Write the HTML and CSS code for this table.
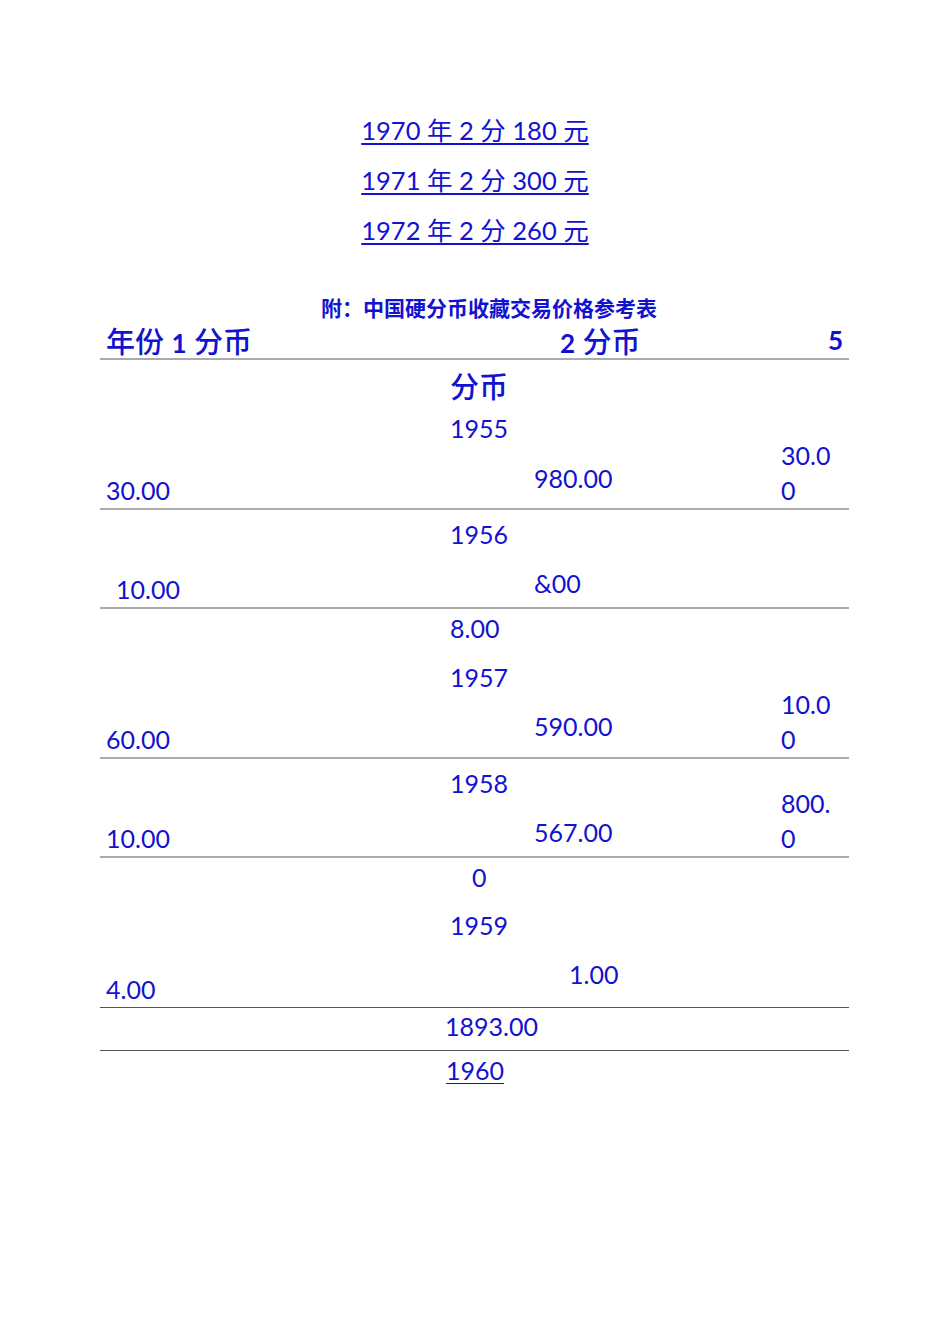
FILE: index.html
```html
<!DOCTYPE html>
<html lang="zh">
<head>
<meta charset="utf-8">
<title>中国硬分币收藏交易价格参考表</title>
<link rel="stylesheet" href="styles.css">
</head>
<body>
<div class="page">
  <div class="links">
    <a class="lnk" href="#">1970 年 2 分 180 元</a>
    <a class="lnk" href="#">1971 年 2 分 300 元</a>
    <a class="lnk" href="#">1972 年 2 分 260 元</a>
  </div>
  <div class="title">附：中国硬分币收藏交易价格参考表</div>
  <div class="table">
    <div class="row head">
      <div class="c c1"><span><span class="cjk">年份</span> <b>1</b> <span class="cjk">分币</span></span></div>
      <div class="c c2"></div>
      <div class="c c3 h3"><span><b>2</b> <span class="cjk">分币</span></span></div>
      <div class="c c4 h4"><b>5</b></div>
    </div>
    <div class="row tall">
      <div class="c c1 end">30.00</div>
      <div class="c c2 pt5"><div class="big">分币</div><div class="mt6">1955</div></div>
      <div class="c c3 end pb12">980.00</div>
      <div class="c c4 end"><span class="wrap">30.00</span></div>
    </div>
    <div class="row short">
      <div class="c c1 end pl16">10.00</div>
      <div class="c c2 pt7">1956</div>
      <div class="c c3 end pb6">&amp;00</div>
      <div class="c c4"></div>
    </div>
    <div class="row tall">
      <div class="c c1 end">60.00</div>
      <div class="c c2 pt2"><div>8.00</div><div class="mt14">1957</div></div>
      <div class="c c3 end pb13">590.00</div>
      <div class="c c4 end"><span class="wrap">10.00</span></div>
    </div>
    <div class="row short">
      <div class="c c1 end">10.00</div>
      <div class="c c2 pt7">1958</div>
      <div class="c c3 end pb6">567.00</div>
      <div class="c c4 end"><span class="wrap">800.0</span></div>
    </div>
    <div class="row tall dark">
      <div class="c c1 end">4.00</div>
      <div class="c c2 pt2"><div class="pl22">0</div><div class="mt13">1959</div></div>
      <div class="c c3 end pb15 pl35">1.00</div>
      <div class="c c4"></div>
    </div>
    <div class="row total dark">
      <div class="c sum">1893.00</div>
    </div>
    <div class="last"><a class="lnk small" href="#">1960</a></div>
  </div>
</div>
</body>
</html>
```

FILE: styles.css
```css
html, body {
  margin: 0;
  padding: 0;
  background: #ffffff;
}

body {
  font-family: Lato, "Noto Sans CJK SC", sans-serif;
  color: #1212cf;
}

.page {
  width: 950px;
  padding-top: 105px;
}

.links {
  display: flex;
  flex-direction: column;
  align-items: center;
}

.lnk {
  color: #1212cf;
  font-size: 25.5px;
  line-height: 50px;
  text-decoration: underline;
  text-decoration-thickness: 2px;
  text-underline-offset: 3px;
}

.title {
  margin-top: 40px;
  padding-left: 28px;
  text-align: center;
  font-size: 21px;
  line-height: 24px;
  font-weight: 700;
  font-family: "Noto Sans CJK SC", sans-serif;
}

.table {
  margin-left: 100px;
  width: 749px;
}

.row {
  display: grid;
  grid-template-columns: 350px 84px 247px 68px;
  box-sizing: border-box;
  border-bottom: 2px solid #ababab;
  font-size: 25px;
  line-height: 35px;
}

.row.dark {
  border-bottom: 1px solid #555555;
}

.head {
  height: 41px;
  padding-top: 4px;
  font-size: 29px;
  line-height: 35px;
}

.head b {
  font-weight: 700;
  font-size: 26px;
}

.cjk {
  font-family: "Noto Sans CJK SC", sans-serif;
  font-weight: 500;
}

.tall { height: 150px; }
.short { height: 99px; }
.total { height: 43px; }

.c {
  display: flex;
  flex-direction: column;
  white-space: nowrap;
}

.c1 { padding-left: 6px; }

.end { justify-content: flex-end; }

.h3 { padding-left: 26px; }
.h4 { align-items: flex-end; padding-right: 6px; }

.big {
  font-size: 29px;
  line-height: 40px;
  font-weight: 500;
  font-family: "Noto Sans CJK SC", sans-serif;
}

.wrap {
  display: block;
  width: 56px;
  white-space: normal;
  word-break: break-all;
}

.pt2 { padding-top: 2px; }
.pt5 { padding-top: 5px; }
.pt7 { padding-top: 7px; }
.pb6 { padding-bottom: 6px; }
.pb12 { padding-bottom: 12px; }
.pb13 { padding-bottom: 13px; }
.pb15 { padding-bottom: 15px; }
.mt6 { margin-top: 6px; }
.mt13 { margin-top: 13px; }
.mt14 { margin-top: 14px; }
.pl16 { padding-left: 16px; }
.pl22 { padding-left: 22px; }
.pl35 { padding-left: 35px; }

.sum {
  grid-column: 1 / -1;
  padding-left: 345px;
  padding-top: 1px;
}

.last {
  padding-left: 346px;
}

.lnk.small {
  font-size: 25px;
  line-height: 38px;
  text-decoration-thickness: 1px;
}
```
